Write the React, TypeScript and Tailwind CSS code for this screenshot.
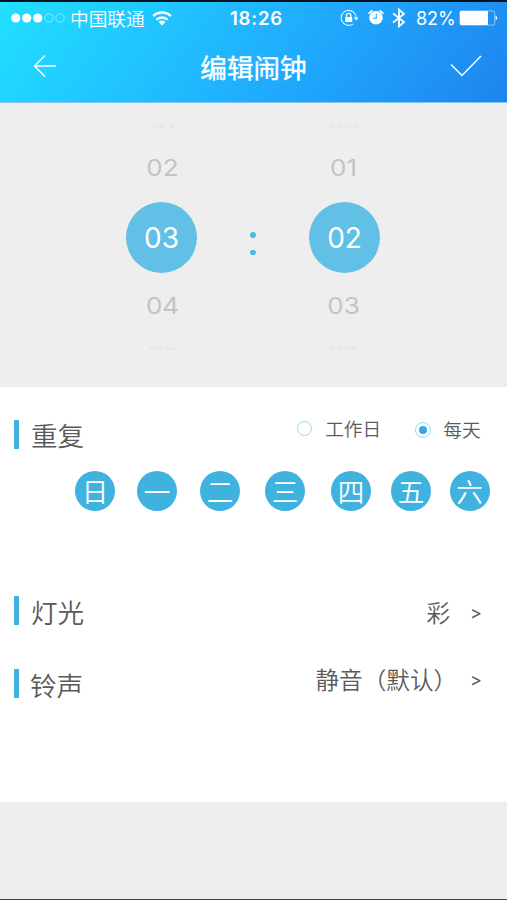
import React from "react";

type PickerColumnProps = {
  values: string[];
  shift: string;
};

type DayItem = {
  label: string;
  gap: string;
};

const days: DayItem[] = [
  { label: "日", gap: "ml-0" },
  { label: "一", gap: "ml-[22px]" },
  { label: "二", gap: "ml-[23px]" },
  { label: "三", gap: "ml-[25px]" },
  { label: "四", gap: "ml-[26px]" },
  { label: "五", gap: "ml-[20px]" },
  { label: "六", gap: "ml-[18.5px]" },
];

const StatusBar: React.FC = () => {
  return (
    <div className="flex h-[33px] items-center text-white">
      <svg width="56" height="12" viewBox="0 0 56 12" className="ml-[10px] mt-[-2px] shrink-0">
        <circle cx="5.7" cy="6" r="4.6" fill="white" />
        <circle cx="16.7" cy="6" r="4.6" fill="white" />
        <circle cx="27.7" cy="6" r="4.6" fill="white" />
        <circle cx="39" cy="6" r="4.2" fill="none" stroke="white" strokeOpacity=".5" strokeWidth=".9" />
        <circle cx="50" cy="6" r="4.2" fill="none" stroke="white" strokeOpacity=".5" strokeWidth=".9" />
      </svg>
      <span className="ml-[4px] mt-[-1px] w-[76px] shrink-0 whitespace-nowrap text-[18.7px] font-[350] leading-none">中国联通</span>
      <svg width="20" height="15" viewBox="0 0 20 15" className="ml-[6px] mt-[-1px] shrink-0" fill="none" stroke="white">
        <path d="M1.2 5.2A12.4 12.4 0 0 1 18.8 5.2" strokeWidth="2.4" />
        <path d="M4.4 8.8A8 8 0 0 1 15.6 8.8" strokeWidth="2.3" />
        <path d="M10 14.6L6.6 11A4.8 4.8 0 0 1 13.4 11Z" fill="white" stroke="none" />
      </svg>
      <span className="ml-[58px] w-[54px] shrink-0 whitespace-nowrap font-['Inter'] text-[18.5px] font-semibold leading-none tracking-[0.8px]">18:26</span>
      <svg width="19" height="18" viewBox="0 0 19 18" className="ml-[56px] mt-[-2px] shrink-0">
        <path d="M13.2 14.9A7.5 7.5 0 1 1 16.2 8.8" fill="none" stroke="white" strokeOpacity=".85" strokeWidth="1.1" />
        <path d="M13.7 8.4H18.6L16.2 11.4Z" fill="white" />
        <rect x="5.2" y="8" width="7" height="5" rx=".6" fill="white" />
        <path d="M6.5 8V6.5A2.2 2.2 0 0 1 10.9 6.5V8" fill="none" stroke="white" strokeWidth="1.2" />
      </svg>
      <svg width="16" height="17" viewBox="0 0 16 17" className="ml-[9px] mt-[-2px] shrink-0">
        <circle cx="8" cy="8.8" r="6.8" fill="white" />
        <path d="M1.2 4.2L3.8 1.8M12.2 1.8L14.8 4.2" stroke="white" strokeWidth="1.8" strokeLinecap="round" />
        <path d="M8.3 4.8V9.2H4.8" fill="none" stroke="#25a9fc" strokeWidth="1.1" />
      </svg>
      <svg width="14" height="20" viewBox="0 0 14 20" className="ml-[8px] mt-[-1px] shrink-0">
        <path d="M1 5.4L12 14L7 18.4V1.6L12 6L1 14.6" fill="none" stroke="white" strokeWidth="1.8" />
      </svg>
      <span className="ml-[10px] w-[39px] shrink-0 whitespace-nowrap font-['Inter'] text-[18px] leading-none tracking-[-0.1px]">82%</span>
      <svg width="39" height="16" viewBox="0 0 39 16" className="ml-[4px] mt-[-2px] shrink-0">
        <rect x=".9" y=".9" width="34.8" height="14.2" rx="1.8" fill="none" stroke="white" strokeOpacity=".55" strokeWidth=".9" />
        <rect x="1" y="1" width="28" height="14" rx="1" fill="white" />
        <path d="M36.6 5.2Q39.6 8 36.6 10.8Z" fill="white" />
      </svg>
    </div>
  );
};

const Header: React.FC = () => {
  return (
    <header className="h-[103px] border-b border-t-2 border-b-[#83c5f2] border-t-[#06121c] bg-[linear-gradient(126deg,#22dfff_0%,#20c5ff_30%,#20a8fc_60%,#1e84ee_100%)]">
      <StatusBar />
      <div className="flex h-[62px] items-center justify-between pl-[33px] pr-[25px] text-white">
        <svg width="24" height="24" viewBox="0 0 24 24" fill="none" stroke="white" strokeWidth="1.4">
          <path d="M12 1.5L1.5 12L12 22.5M1.5 12H23" />
        </svg>
        <h1 className="mt-[2px] text-[26.6px] font-normal leading-none [-webkit-text-stroke:0.4px_white]">编辑闹钟</h1>
        <svg width="32" height="24" viewBox="0 0 32 24" fill="none" stroke="white" strokeWidth="1.5">
          <path d="M1 10.5L12 21.5L31 2" />
        </svg>
      </div>
    </header>
  );
};

const PickerColumn: React.FC<PickerColumnProps> = ({ values, shift }) => {
  return (
    <div className="flex w-[71px] flex-col items-center font-['Inter'] leading-none">
      <span className={`${shift} h-[6px] scale-y-[0.14] text-[24px] leading-[6px] text-[#e4e4e4]`}>{values[0]}</span>
      <span className={`${shift} mt-[20px] h-[36px] scale-y-[0.88] text-[26px] leading-[36px] text-[#c3c3c3]`}>{values[1]}</span>
      <span className="mt-[16px] flex size-[71px] items-center justify-center rounded-full bg-[#62bfe5] text-[28px] text-white">
        {values[2]}
      </span>
      <span className={`${shift} mt-[15px] h-[36px] scale-y-[0.88] text-[26px] leading-[36px] text-[#c3c3c3]`}>{values[3]}</span>
      <span className={`${shift} mt-[22px] h-[6px] scale-y-[0.14] text-[24px] leading-[6px] text-[#e4e4e4]`}>{values[4]}</span>
    </div>
  );
};

const TimePicker: React.FC = () => {
  return (
    <section className="flex h-[284px] pl-[126px] pt-[21px]">
      <PickerColumn values={["01", "02", "03", "04", "05"]} shift="translate-x-[1px]" />
      <div className="ml-[53px] mt-[108px] flex w-[6px] flex-col gap-[12px]">
        <span className="size-[5.5px] rounded-full bg-[#4db7e3]" />
        <span className="size-[5.5px] rounded-full bg-[#4db7e3]" />
      </div>
      <div className="ml-[53px]">
        <PickerColumn values={["00", "01", "02", "03", "04"]} shift="-translate-x-[1px]" />
      </div>
    </section>
  );
};

const Marker = () => <span className="h-[29px] w-[5px] shrink-0 bg-[#3fb2df]" />;

const App: React.FC = () => {
  return (
    <div className="flex h-[900px] w-[507px] flex-col overflow-hidden border-b border-[#444] bg-[#eee] font-['Noto_Sans_CJK_SC',sans-serif]">
      <Header />
      <TimePicker />

      <main className="h-[415px] bg-white font-[350] text-[#5a5a5a]">
        <div className="flex h-[84px] items-start pl-[13.5px] pt-[33px]">
          <Marker />
          <h2 className="ml-[12.5px] mt-[2px] text-[26.6px] leading-none">重复</h2>
          <div className="ml-[213px] flex items-start text-[18.7px] leading-none">
            <span className="mt-[1px] size-[15px] rounded-full border border-[#8fdcf5]" />
            <span className="ml-[13px] mt-[-1px]">工作日</span>
            <span className="ml-[34px] mt-[2px] flex size-[16px] items-center justify-center rounded-full border border-[#8fdcf5]">
              <span className="size-[8px] rounded-full bg-[#36abd9]" />
            </span>
            <span className="ml-[12px]">每天</span>
          </div>
        </div>

        <div className="flex pl-[75px]">
          {days.map((day) => (
            <span
              key={day.label}
              className={`${day.gap} flex size-[40px] shrink-0 items-center justify-center rounded-full bg-[#3fb2df] text-[26.6px] leading-none text-white`}
            >
              {day.label}
            </span>
          ))}
        </div>

        <div className="mt-[85px] flex h-[73px] items-start pl-[13.5px] pr-[25px]">
          <Marker />
          <h2 className="ml-[12.5px] mt-[3px] text-[26.6px] leading-none">灯光</h2>
          <span className="ml-auto mt-[5px] text-[23.6px] leading-none">彩</span>
          <span className="ml-[20px] mt-[8px] font-['Inter'] text-[18px] font-normal leading-none">&gt;</span>
        </div>

        <div className="flex items-start pl-[13.5px] pr-[25px]">
          <Marker />
          <h2 className="ml-[11.5px] mt-[3px] text-[26.6px] leading-none">铃声</h2>
          <span className="ml-auto mt-[-1px] text-[23.6px] leading-none">静音（默认）</span>
          <span className="ml-[13px] mt-[2px] font-['Inter'] text-[18px] font-normal leading-none">&gt;</span>
        </div>
      </main>
    </div>
  );
};

export default App;
